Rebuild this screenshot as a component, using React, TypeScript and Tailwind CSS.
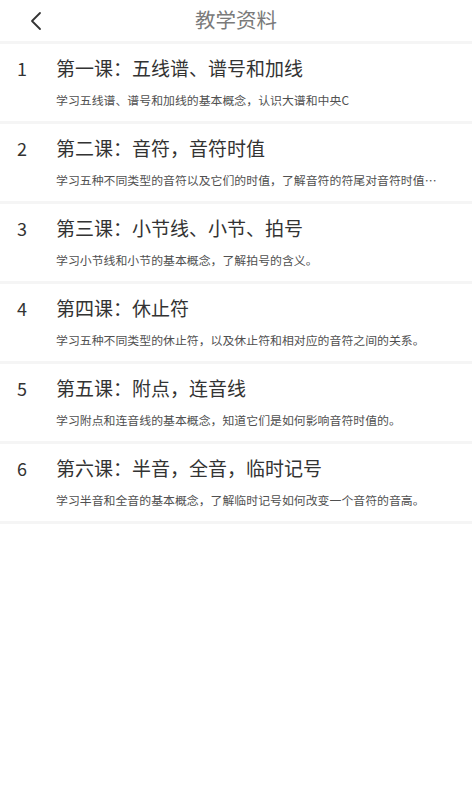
const lessons = [
  { title: "第一课：五线谱、谱号和加线", desc: "学习五线谱、谱号和加线的基本概念，认识大谱和中央C" },
  { title: "第二课：音符，音符时值", desc: "学习五种不同类型的音符以及它们的时值，了解音符的符尾对音符时值的影响。" },
  { title: "第三课：小节线、小节、拍号", desc: "学习小节线和小节的基本概念，了解拍号的含义。" },
  { title: "第四课：休止符", desc: "学习五种不同类型的休止符，以及休止符和相对应的音符之间的关系。" },
  { title: "第五课：附点，连音线", desc: "学习附点和连音线的基本概念，知道它们是如何影响音符时值的。" },
  { title: "第六课：半音，全音，临时记号", desc: "学习半音和全音的基本概念，了解临时记号如何改变一个音符的音高。" },
];

const App = () => {
  return (
    <div
      className="min-h-screen w-full bg-white text-[#333]"
      style={{ fontFamily: '"Noto Sans CJK SC", "Noto Sans", sans-serif' }}
    >
      {/* header */}
      <div className="relative flex h-[44px] items-center justify-center border-b-[3px] border-[#f5f5f5] pb-[2px]">
        <button className="absolute left-[28px] top-[11px] text-[#333]">
          <svg width="16" height="20" viewBox="0 0 16 20" fill="none">
            <path d="M12 2 L4 10 L12 18" stroke="currentColor" strokeWidth="1.8" strokeLinecap="round" strokeLinejoin="round" />
          </svg>
        </button>
        <h1 className="text-[20.5px] font-normal text-[#7a7a7a]">教学资料</h1>
      </div>

      {/* lesson list */}
      <div className="flex flex-col">
        {lessons.map((l, i) => (
          <div key={i} className="flex h-[80px] flex-col border-b-[3px] border-[#f5f5f5] pl-[17px] pr-[30px]">
            <div className="flex items-center pt-[12px]">
              <span className="w-[39px] text-[18px] leading-[24px] text-[#333]">{i + 1}</span>
              <span className="text-[19px] leading-[24px] text-[#333]">{l.title}</span>
            </div>
            <p className="mt-[12px] truncate pl-[39px] text-[11.9px] leading-[16px] text-[#505050]">{l.desc}</p>
          </div>
        ))}
      </div>
    </div>
  );
};

export default App;
